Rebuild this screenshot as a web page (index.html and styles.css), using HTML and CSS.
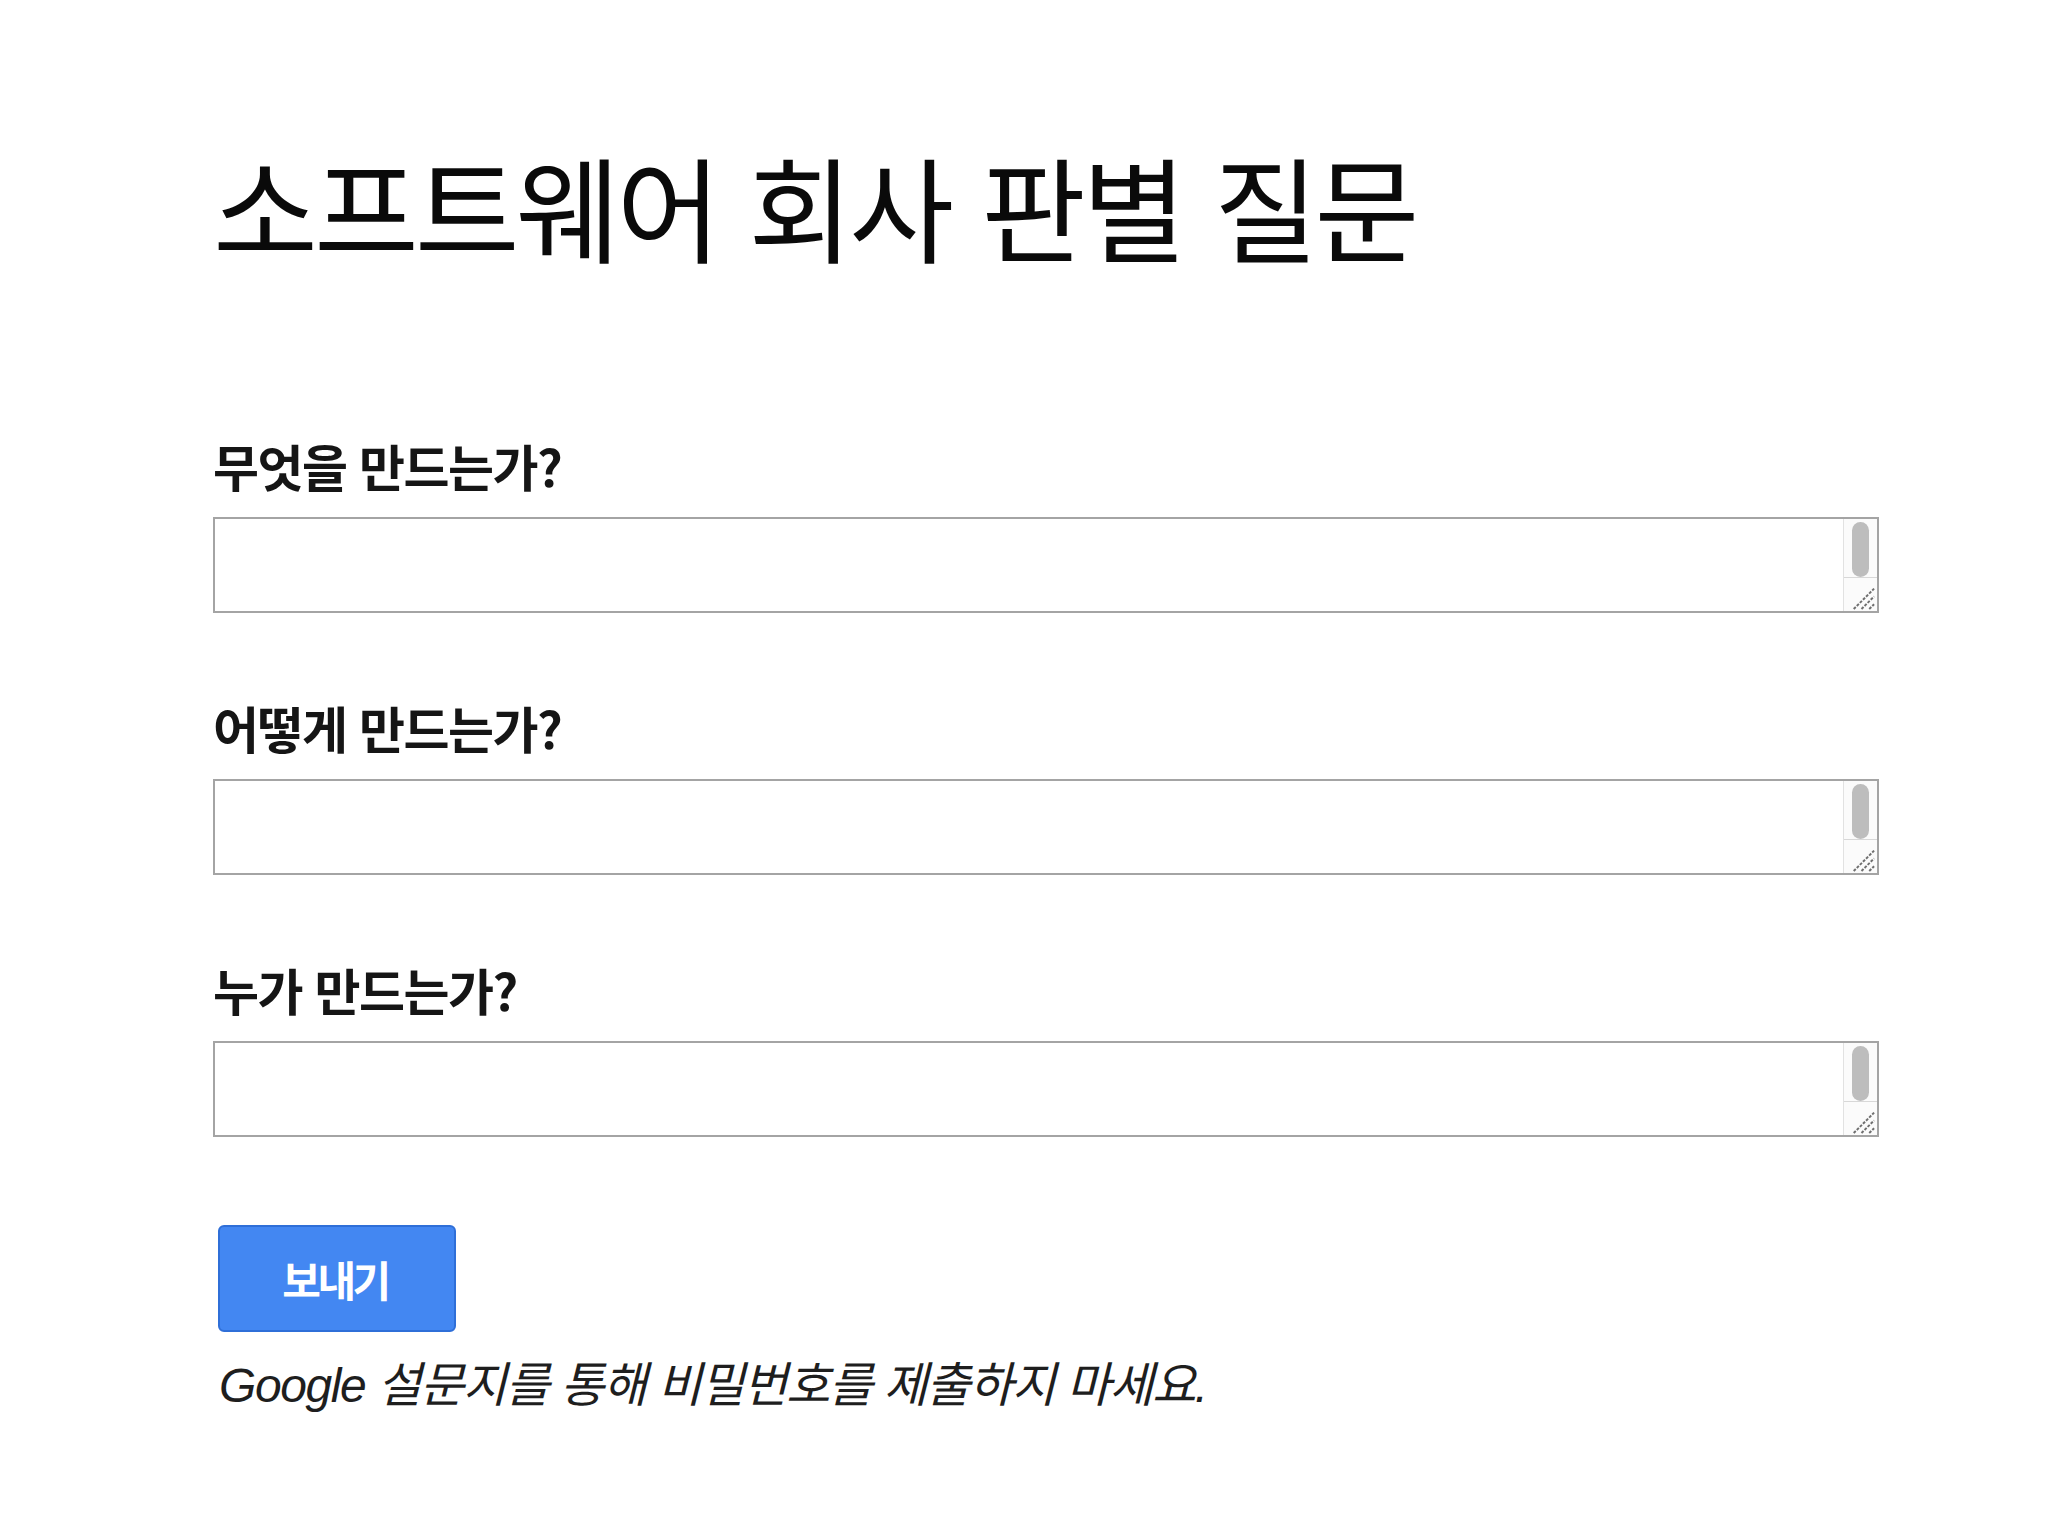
FILE: index.html
```html
<!DOCTYPE html>
<html lang="ko">
<head>
<meta charset="utf-8">
<title>소프트웨어 회사 판별 질문</title>
<link rel="stylesheet" href="styles.css">
</head>
<body>
<main class="form">
  <h1 class="title">소프트웨어 회사 판별 질문</h1>

  <div class="question first">
    <label class="label" for="q1">무엇을 만드는가?</label>
    <div class="field">
      <textarea id="q1" class="answer"></textarea>
      <div class="scroll"><div class="thumb"></div><div class="grip"><svg viewBox="0 0 34 34" width="34" height="34"><path d="M10 32 L31 11 M18 32 L31 19 M26 32 L31 27" stroke="#6f6f6f" stroke-width="2" fill="none" stroke-dasharray="3 1.5"/></svg></div></div>
    </div>
  </div>

  <div class="question">
    <label class="label" for="q2">어떻게 만드는가?</label>
    <div class="field">
      <textarea id="q2" class="answer"></textarea>
      <div class="scroll"><div class="thumb"></div><div class="grip"><svg viewBox="0 0 34 34" width="34" height="34"><path d="M10 32 L31 11 M18 32 L31 19 M26 32 L31 27" stroke="#6f6f6f" stroke-width="2" fill="none" stroke-dasharray="3 1.5"/></svg></div></div>
    </div>
  </div>

  <div class="question">
    <label class="label" for="q3">누가 만드는가?</label>
    <div class="field">
      <textarea id="q3" class="answer"></textarea>
      <div class="scroll"><div class="thumb"></div><div class="grip"><svg viewBox="0 0 34 34" width="34" height="34"><path d="M10 32 L31 11 M18 32 L31 19 M26 32 L31 27" stroke="#6f6f6f" stroke-width="2" fill="none" stroke-dasharray="3 1.5"/></svg></div></div>
    </div>
  </div>

  <button class="submit" type="button">보내기</button>
  <p class="note">Google 설문지를 통해 비밀번호를 제출하지 마세요.</p>
</main>
</body>
</html>
```

FILE: styles.css
```css
html, body {
  margin: 0;
  padding: 0;
  background: #ffffff;
}

body {
  font-family: "Noto Sans CJK KR", "Noto Sans", sans-serif;
  color: #111111;
}

.form {
  display: flex;
  flex-direction: column;
  align-items: flex-start;
  padding: 137px 0 0 213px;
}

.title {
  margin: 0;
  font-size: 114px;
  font-weight: 400;
  line-height: 1.2;
  letter-spacing: -4px;
  word-spacing: 3px;
  color: #0a0a0a;
}

.question {
  display: flex;
  flex-direction: column;
  margin-top: 84px;
}

.question.first {
  margin-top: 161px;
}

.label {
  display: block;
  font-size: 50px;
  font-weight: 700;
  line-height: 1.2;
  letter-spacing: -1.5px;
  color: #151515;
  margin-bottom: 22px;
}

.field {
  position: relative;
  width: 1666px;
  height: 96px;
}

.answer {
  display: block;
  box-sizing: border-box;
  width: 1666px;
  height: 96px;
  margin: 0;
  border: 2px solid #a4a4a4;
  border-radius: 0;
  background: #ffffff;
  resize: none;
  outline: none;
}

.scroll {
  position: absolute;
  top: 2px;
  right: 2px;
  bottom: 2px;
  width: 34px;
  box-sizing: border-box;
  border-left: 1px solid #e2e2e2;
  background: #fbfbfb;
  display: flex;
  flex-direction: column;
}

.thumb {
  width: 17px;
  height: 55px;
  margin: 3px 0 0 8px;
  border-radius: 9px;
  background: #bdbdbd;
}

.grip {
  margin-top: auto;
  height: 34px;
  border-top: 1px solid #d8d8d8;
  box-sizing: border-box;
}

.grip svg {
  display: block;
  width: 33px;
  height: 33px;
}

.submit {
  margin-top: 88px;
  margin-left: 5px;
  width: 238px;
  height: 107px;
  box-sizing: border-box;
  background: #4387f2;
  border: 2px solid #2f6fd8;
  border-radius: 6px;
  color: #ffffff;
  font-family: "Noto Sans CJK KR", sans-serif;
  font-size: 42px;
  font-weight: 700;
  letter-spacing: -3.5px;
  padding: 0 4px 0 0;
}

.note {
  margin: 25px 0 0 6px;
  font-family: "Liberation Sans", "Noto Sans CJK KR", sans-serif;
  font-style: italic;
  font-size: 48px;
  line-height: 1.2;
  letter-spacing: -1.4px;
  color: #1e1e1e;
}
```
